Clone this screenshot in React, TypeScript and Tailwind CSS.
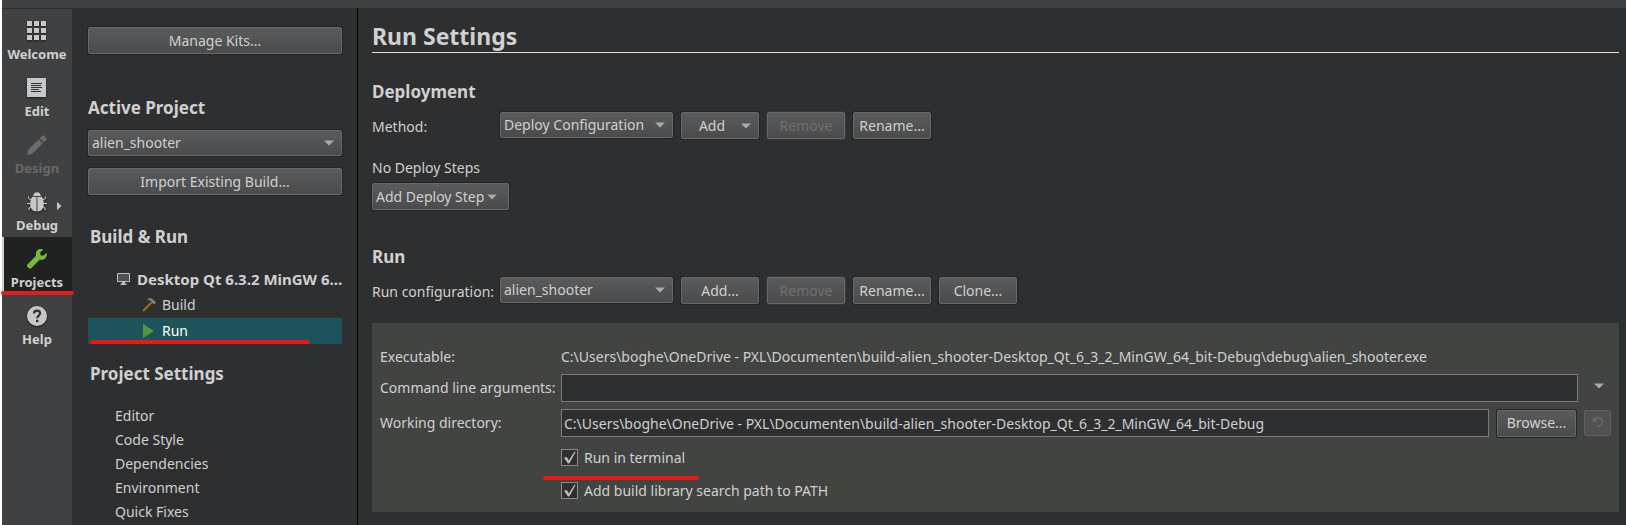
import React, { useState } from "react";

const RAISED =
  "rounded-[2px] border border-[#68696a] bg-linear-to-b from-[#5a5b5c] to-[#4a4b4c] shadow-[0_0_0_1px_#242526] text-[#d0d0d0]";

function Arrow({ className = "" }: { className?: string }) {
  return (
    <svg width="10" height="6" viewBox="0 0 10 6" className={className} aria-hidden="true">
      <path d="M0 0.5h10L5 5.5z" fill="#a9aaab" />
    </svg>
  );
}

function PushButton({
  children,
  className = "justify-center",
  disabled = false,
}: {
  children: React.ReactNode;
  className?: string;
  disabled?: boolean;
}) {
  return (
    <button
      type="button"
      disabled={disabled}
      className={`flex h-[27px] shrink-0 items-center whitespace-nowrap disabled:text-[#6f7071] disabled:shadow-[0_0_0_1px_#38393a] ${RAISED} ${className}`}
    >
      {children}
    </button>
  );
}

function Combo({ id, label, value, className = "" }: { id: string; label?: string; value: string; className?: string }) {
  return (
    <div className={`relative shrink-0 ${className}`}>
      <select id={id} aria-label={label} className={`block h-[26px] w-full appearance-none pr-6 pl-[3px] outline-none ${RAISED}`}>
        <option>{value}</option>
      </select>
      <Arrow className="pointer-events-none absolute top-2.5 right-2" />
    </div>
  );
}

function CheckBox({ id, label }: { id: string; label: string }) {
  const [checked, setChecked] = useState(true);
  return (
    <div className="flex items-center gap-1.5">
      <span className="relative block size-[17px]">
        <input
          id={id}
          type="checkbox"
          checked={checked}
          onChange={(e) => setChecked(e.target.checked)}
          className="block size-[17px] appearance-none border border-[#8a8b8a] bg-[#2e2f30]"
        />
        {checked && (
          <svg viewBox="0 0 17 17" className="pointer-events-none absolute inset-0 size-[17px]" aria-hidden="true">
            <path d="M3 8.8 5.8 8l2 3.4L13.6 2.6l1 .5L8.3 14.6H7z" fill="#bcbdbd" />
          </svg>
        )}
      </span>
      <label htmlFor={id}>{label}</label>
    </div>
  );
}

const shadow = "drop-shadow-[0_1px_1px_rgba(0,0,0,0.6)]";

const WelcomeIcon = (
  <svg width="20" height="20" viewBox="0 0 20 20" className={shadow} fill="#c6c7c8">
    {[0, 7, 14].map((y) => [0, 7, 14].map((x) => <rect key={`${x}-${y}`} x={x} y={y} width="5" height="5" />))}
  </svg>
);
const EditIcon = (
  <svg width="20" height="20" viewBox="0 0 20 20" className={shadow}>
    <rect width="19" height="19" fill="#c6c7c8" />
    <path d="M4 5.5h11M4 7.5h10M4 9.5h11M4 11.5h8M4 13.5h10" stroke="#303132" />
  </svg>
);
const DesignIcon = (
  <svg width="20" height="20" viewBox="0 0 20 20" fill="#6b6c6d">
    <path d="M0 20 1.5 14.5 11.8 4.2l4 4L5.500 18.500zM12.800 3.200 16 0l4 4-3.200 3.200z" />
  </svg>
);
const DebugIcon = (
  <svg width="20" height="20" viewBox="0 0 20 20" className={shadow}>
    <path d="M6.300 4a3.700 3.800 0 0 1 7.400 0z" fill="#c6c7c8" />
    <path
      d="M9.600 4.800v14.700C5.500 19.300 3.200 16.500 3.200 12c0-3 .8-5.500 2-7.200zM10.400 4.800v14.700c4.100-.2 6.400-3 6.400-7.500 0-3-.8-5.500-2-7.200z"
      fill="#c6c7c8"
    />
    <path
      d="M4.500 8 1.500 6.500V4.500M4 11.500H0M4.500 14.500l-2.500 1.500v2M15.500 8l3-1.500V4.500M16 11.500h4M15.500 14.500l2.500 1.500v2"
      fill="none"
      stroke="#c6c7c8"
      strokeWidth="1"
    />
  </svg>
);
const ProjectsIcon = (
  <svg width="20" height="20" viewBox="0 0 20 20">
    <path
      d="M16.300.7C14.500-.3 12-.2 10.300 1.500 8.800 3 8.500 5 9.100 6.800L.7 15.200a2 2 0 0 0 0 2.900l.9.900a2 2 0 0 0 2.900 0l8.400-8.400c1.800.6 3.700.2 5.100-1.200 1.700-1.700 2.200-3.600 1.500-5.400L16.300 6.800l-2.800-.6-.5-2.700z"
      fill="#78b93c"
    />
  </svg>
);
const HelpIcon = (
  <svg width="20" height="20" viewBox="0 0 20 20" className={shadow}>
    <circle cx="10" cy="10" r="10" fill="#c6c7c8" />
    <path d="M7 7.600C7 5.600 8.300 4.600 10 4.600s3.100 1 3.100 2.700c0 2.300-2.900 2.300-2.900 5" fill="none" stroke="#333435" strokeWidth="2.200" />
    <rect x="9" y="13.800" width="2.400" height="2.400" fill="#333435" />
  </svg>
);

const modes = [
  { name: "Welcome", icon: WelcomeIcon },
  { name: "Edit", icon: EditIcon },
  { name: "Design", icon: DesignIcon, disabled: true },
  { name: "Debug", icon: DebugIcon, menu: true },
  { name: "Projects", icon: ProjectsIcon, active: true },
  { name: "Help", icon: HelpIcon },
];

function ModeBar() {
  return (
    <nav aria-label="Modes" className="w-[71px] shrink-0 border-t border-r border-[#2c2d2e] bg-[#404142]">
      {modes.map((m) => (
        <button
          key={m.name}
          type="button"
          disabled={m.disabled}
          className={`relative flex h-[57px] w-full flex-col items-center gap-[3px] pt-3 text-[13px] leading-5 font-bold ${
            m.active
              ? "border-l-2 border-[#d0d0d0] bg-[#202221] pr-0.5 text-[#d0d0d0]"
              : m.disabled
                ? "text-[#676869]"
                : "text-[#d0d0d0]"
          }`}
        >
          {m.icon}
          <span>{m.name}</span>
          {m.menu && (
            <svg width="5" height="8" viewBox="0 0 5 8" className="absolute top-[22px] right-2.5" aria-hidden="true">
              <path d="M0 0v8l4.500-4z" fill="#c6c7c8" />
            </svg>
          )}
          {m.active && <span className="absolute -right-0.5 -bottom-px -left-[3px] h-1 rounded-full bg-[#e51b1b]" />}
        </button>
      ))}
    </nav>
  );
}

const heading = "text-[17px] leading-6 font-bold";

function ProjectPanel() {
  return (
    <aside className="w-[285px] shrink-0 border-r border-black pt-[19px] pr-[15px] pl-[15px]">
      <PushButton className="w-full justify-center">Manage Kits...</PushButton>
      <h2 className={`mt-[42px] ${heading}`}>Active Project</h2>
      <Combo id="project" label="Active Project" value="alien_shooter" className="mt-2.5" />
      <PushButton className="mt-3 w-full justify-center">Import Existing Build...</PushButton>

      <h2 className={`mt-[30px] pl-0.5 ${heading}`}>Build &amp; Run</h2>
      <ul className="mt-[17px] leading-[26px]">
        <li className="flex items-center gap-[7px] pl-[29px] text-[15px] leading-[26px] font-bold whitespace-nowrap">
          <svg width="13" height="12" viewBox="0 0 13 12" className="shrink-0" aria-hidden="true">
            <path d="M.5.5h12v8H.5z" fill="#505152" stroke="#c0c1c2" />
            <path d="M5 9h3v1.500h1.500V12h-6v-1.500H5z" fill="#c0c1c2" />
          </svg>
          <span>Desktop Qt 6.3.2 MinGW 6...</span>
        </li>
        <li className="flex items-center gap-1.5 pl-[54px]">
          <svg width="14" height="14" viewBox="0 0 14 14" aria-hidden="true">
            <path d="M1 13 9.500 4.500" stroke="#b06a1c" strokeWidth="2" />
            <path d="M5.500.8C8 0 9.800.3 11.200 1.800L14 4.600l-2.300 1.600-2-2.100C8.500 2.700 7.500 2 5.500 1.800z" fill="#828384" />
          </svg>
          <span>Build</span>
        </li>
        <li className="relative flex items-center gap-1.5 bg-[#1d545c] pl-[54px] text-white">
          <svg width="14" height="14" viewBox="0 0 14 14" aria-hidden="true">
            <path d="M1 0v14l11-7z" fill="#55963e" />
          </svg>
          <span>Run</span>
          <span className="absolute bottom-0 left-0.5 h-1 w-[220px] rounded-full bg-[#e51b1b]" />
        </li>
      </ul>

      <h2 className={`mt-[18px] pl-0.5 ${heading}`}>Project Settings</h2>
      <ul className="mt-[18px] pl-[27px] leading-6">
        {["Editor", "Code Style", "Dependencies", "Environment", "Quick Fixes"].map((s) => (
          <li key={s}>{s}</li>
        ))}
      </ul>
    </aside>
  );
}

function RunSettings() {
  return (
    <main className="min-w-0 flex-1 pt-3 pr-[7px] pb-3 pl-3.5">
      <h1 className="border-b border-[#e0e0e0] text-[23px] leading-8 font-bold">Run Settings</h1>

      <h2 className={`mt-[27px] ${heading}`}>Deployment</h2>
      <div className="mt-2 flex items-start gap-2">
        <label htmlFor="method" className="w-[120px] shrink-0 leading-[29px]">Method:</label>
        <Combo id="method" value="Deploy Configuration" className="w-[173px]" />
        <PushButton className="relative w-[78px] justify-center pr-4">
          Add
          <Arrow className="absolute top-2.5 right-[7px]" />
        </PushButton>
        <PushButton className="w-[78px] justify-center" disabled>Remove</PushButton>
        <PushButton className="w-[78px] justify-center">Rename...</PushButton>
      </div>

      <p className="mt-[15px] leading-6">No Deploy Steps</p>
      <PushButton className="mt-[3px] w-[137px] justify-start gap-[3px] pl-[3px]">
        Add Deploy Step
        <Arrow />
      </PushButton>

      <h2 className={`mt-[35px] ${heading}`}>Run</h2>
      <div className="mt-2 flex items-start gap-2">
        <label htmlFor="runconfig" className="w-[120px] shrink-0 leading-[29px] whitespace-nowrap">Run configuration:</label>
        <Combo id="runconfig" value="alien_shooter" className="w-[173px]" />
        <PushButton className="w-[78px] justify-center">Add...</PushButton>
        <PushButton className="w-[78px] justify-center" disabled>Remove</PushButton>
        <PushButton className="w-[78px] justify-center">Rename...</PushButton>
        <PushButton className="w-[78px] justify-center">Clone...</PushButton>
      </div>

      <section className="mt-[17px] grid grid-cols-[173px_1fr] gap-x-2 gap-y-[7px] bg-[#424442] px-2 pt-6 pb-[11px]">
        <span className="leading-5">Executable:</span>
        <span className="leading-5 whitespace-nowrap">
          C:\Users\boghe\OneDrive - PXL\Documenten\build-alien_shooter-Desktop_Qt_6_3_2_MinGW_64_bit-Debug\debug\alien_shooter.exe
        </span>

        <label htmlFor="args" className="leading-7 whitespace-nowrap">Command line arguments:</label>
        <div className="flex items-center">
          <input id="args" className="h-7 min-w-0 flex-1 border border-[#7b7c7b] bg-[#2e2f30] px-0.5 outline-none" />
          <button type="button" aria-label="Argument history" className="flex h-7 w-[33px] items-center justify-center pb-1 pl-2">
            <Arrow />
          </button>
        </div>

        <label htmlFor="cwd" className="leading-7">Working directory:</label>
        <div className="flex items-center gap-2">
          <input
            id="cwd"
            defaultValue="C:\Users\boghe\OneDrive - PXL\Documenten\build-alien_shooter-Desktop_Qt_6_3_2_MinGW_64_bit-Debug"
            className="h-7 min-w-0 flex-1 border border-[#7b7c7b] bg-[#2e2f30] px-0.5 outline-none"
          />
          <PushButton className="w-[79px] justify-center">Browse...</PushButton>
          <button
            type="button"
            disabled
            aria-label="Reset working directory"
            className="flex h-[26px] w-[27px] shrink-0 items-center justify-center rounded-[2px] border border-[#5f605f] bg-[#505152] pb-0.5"
          >
            <svg width="12" height="12" viewBox="0 0 12 12" fill="none" aria-hidden="true">
              <path d="M3 3.500C6 .5 10.500 2 10.500 6c0 3-2.500 4.800-5.500 4.500" stroke="#6c6d6d" strokeWidth="1.300" />
              <path d="M1 1v4.500h4.500z" fill="#6c6d6d" />
            </svg>
          </button>
        </div>

        <div className="relative col-start-2 mt-[3px] flex flex-col gap-3 leading-[21px]">
          <CheckBox id="terminal" label="Run in terminal" />
          <CheckBox id="libpath" label="Add build library search path to PATH" />
          <span className="absolute top-[29px] -left-[18px] h-1 w-[156px] rounded-full bg-[#e51b1b]" />
        </div>
      </section>
    </main>
  );
}

export default function App() {
  return (
    <div className="flex min-h-screen flex-col border-l-2 border-white bg-[#2e2f30] font-['Noto_Sans','Open_Sans',sans-serif] text-sm text-[#d0d0d0]">
      <header className="h-2 shrink-0 bg-[#404142]" />
      <div className="flex flex-1">
        <ModeBar />
        <ProjectPanel />
        <RunSettings />
      </div>
    </div>
  );
}
